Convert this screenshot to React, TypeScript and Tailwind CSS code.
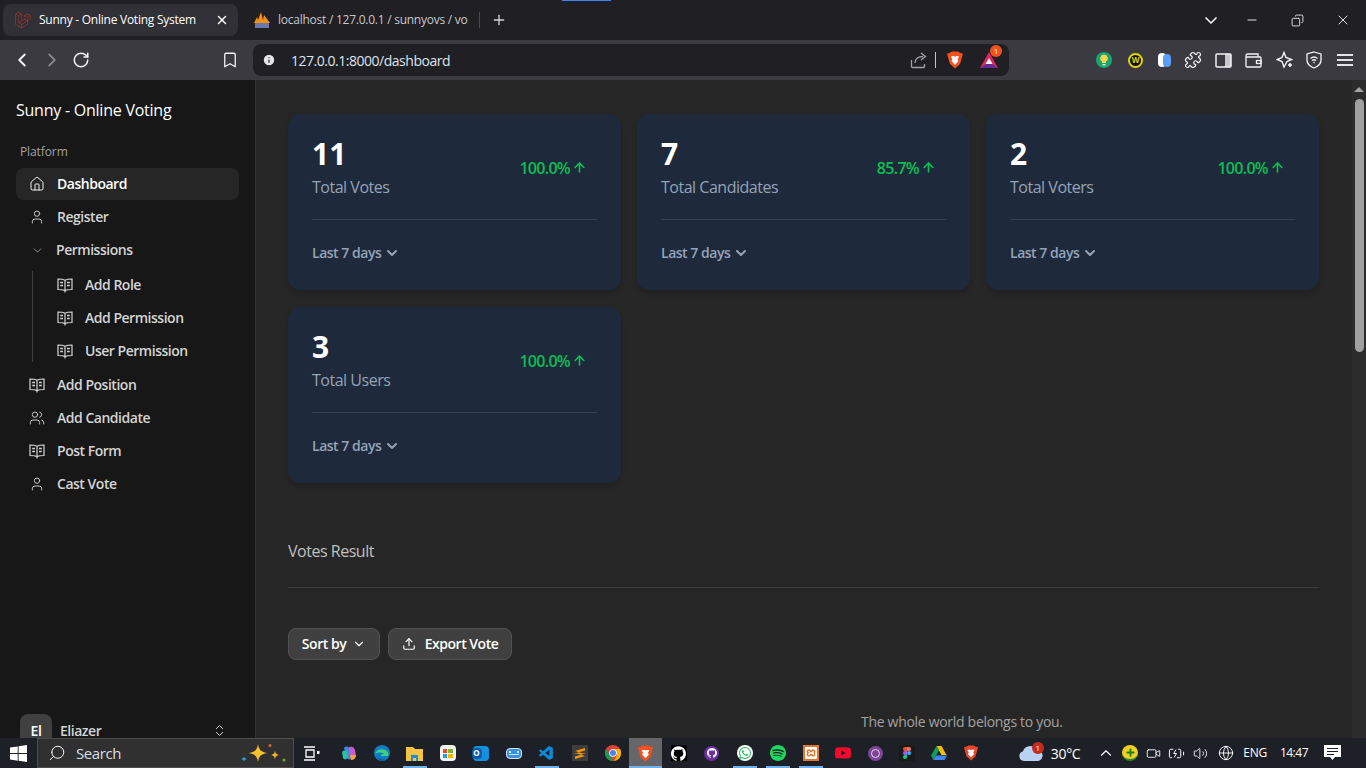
import {
  Bookmark, ChevronDown, ChevronLeft, ChevronRight, ChevronUp, ChevronsUpDown, Copy,
  House, Info, Minus, Plus, Puzzle, RotateCw, Search, Upload, User, Users, Video, Volume2, Globe, X, BatteryCharging, ArrowUp,
} from 'lucide-react';
import { SiGithub, SiLaravel, SiSpotify, SiWhatsapp, SiXampp, SiYoutube } from 'react-icons/si';
import { VscVscode } from 'react-icons/vsc';

const stats = [
  { value: '11', label: 'Total Votes', change: '100.0%' },
  { value: '7', label: 'Total Candidates', change: '85.7%' },
  { value: '2', label: 'Total Voters', change: '100.0%' },
  { value: '3', label: 'Total Users', change: '100.0%' },
];

function BraveIcon({ size = 18, color = '#f4511e' }: { size?: number; color?: string }) {
  return (
    <svg width={size} height={size} viewBox="0 0 18 18">
      <path d="M3.500 2 6 .5h6L14.500 2 17 2.500 16 6l-.5 2-1.500 5-5 4.500L4 13 2.500 8 2 6 1 2.500z" fill={color} />
      <path d="M5 5.500 7.500 5 9 5.800 10.500 5l2.500.5-1.500 3 1 1.500L9 14l-3.500-4 1-1.500z" fill="#fff" />
    </svg>
  );
}

function BookIcon() {
  return (
    <svg width="16" height="16" viewBox="0 0 16 16" fill="none" stroke="currentColor" strokeWidth="1.200">
      <path d="M8 3.200C6.500 2.300 4 2 1 2v10.500c2.800 0 5.500.2 7 1.300 1.500-1.100 4.200-1.300 7-1.300V2c-3 0-5.500.3-7 1.200zM8 3.200V15.500" />
      <path d="M3.200 5.500h2.800M3.200 8.500h2.800M10 5.500h2.800M10 8.500h2.800" strokeWidth="1.500" />
    </svg>
  );
}

function Tabs() {
  return (
    <div className="relative flex h-10 shrink-0 items-center bg-[#1f1f24] pl-[3px] text-[12px] tracking-[-0.25px] text-white">
      <div className="absolute left-[562px] top-0 h-px w-[49px] bg-[#3b82f6]" />
      <div className="flex h-8 w-[235px] items-center rounded-lg bg-[#303036] pl-[12px] pr-[9px]">
        <SiLaravel size={16} color="#b9342c" />
        <span className="ml-[8px] flex-1 truncate">Sunny - Online Voting System</span>
        <X size={14} strokeWidth={2.5} />
      </div>
      <div className="ml-[15px] flex w-[225px] items-center text-[#c8c8cc]">
        <svg width="18" height="17" viewBox="0 0 18 17" className="shrink-0">
          <path d="M1 11 4 5l1 3 3-8 2 8 1-5 3 4 3 4z" fill="#f29111" />
          <rect x="2" y="11" width="14" height="5" fill="#6c78af" />
        </svg>
        <span className="ml-[7px] w-[189px] whitespace-nowrap">localhost / 127.0.0.1 / sunnyovs / vo</span>
      </div>
      <div className="ml-[1px] h-4 w-px bg-[#4a4a50]" />
      <Plus size={16} className="ml-[11px] text-[#d4d4d8]" />
      <div className="ml-auto flex items-center text-white">
        <svg width="16" height="16" viewBox="0 0 16 16" fill="none" stroke="#fff" strokeWidth="1.500" className="mr-[26px]"><path d="M2.500 5.500 8 11l5.500-5.500" /></svg>
        <Minus size={14} strokeWidth={1.5} className="mr-[32px]" />
        <Copy size={13} strokeWidth={1.5} className="mr-[31px] -scale-x-100" />
        <X size={16} strokeWidth={1.3} className="mr-[15px]" />
      </div>
    </div>
  );
}

function Toolbar() {
  return (
    <div className="flex h-10 shrink-0 items-center bg-[#3a3a40] text-[#f4f4f5]">
      <ChevronLeft size={22} strokeWidth={2} className="ml-[11px]" />
      <ChevronRight size={22} strokeWidth={2} className="ml-2 text-[#85858a]" />
      <RotateCw size={18} strokeWidth={2} className="ml-[9px]" />
      <Bookmark size={18} strokeWidth={1.7} className="ml-[131px]" />
      <div className="ml-[14px] flex h-8 w-[756px] items-center rounded-lg bg-[#1f1f24] pl-[9px] pr-[11px]">
        <Info size={14} fill="#e4e4e7" stroke="#1f1f24" />
        <span className="ml-[15px] flex-1 text-[14px] text-[#dbe3ec]">127.0.0.1:8000/dashboard</span>
        <svg width="17" height="17" viewBox="0 0 17 17" fill="none" stroke="#a1a1aa" strokeWidth="1.300">
          <path d="M1.500 8v6.500a1 1 0 0 0 1 1h11a1 1 0 0 0 1-1V12" />
          <path d="M5 11c0-4 3-6.500 8-6.500M11 1l4.500 3.500L11 8" />
        </svg>
        <div className="ml-[8px] mr-[10px] h-4 w-px bg-[#c4c4c8]" />
        <BraveIcon size={18} />
        <div className="relative ml-[16px]">
          <svg width="18" height="16" viewBox="0 0 18 16">
            <path d="M9 0 18 16H0z" fill="#e0245e" />
            <path d="M0 16 9 10l9 6z" fill="#662d91" />
            <path d="M9 6l3.500 6h-7z" fill="#fff" />
          </svg>
          <span className="absolute -right-[4px] -top-[7px] flex h-3 w-3 items-center justify-center rounded-full bg-[#f4511e] text-[8px] tracking-normal text-white">1</span>
        </div>
      </div>
      <svg width="16" height="16" viewBox="0 0 16 16" className="ml-[87px]">
        <circle cx="8" cy="8" r="8" fill="#17a673" />
        <path d="M8 2.500a3.800 3.800 0 0 0-2 7v1.500h4V9.500a3.800 3.800 0 0 0-2-7z" fill="#fcd34d" />
        <rect x="6.500" y="12" width="3" height="1.500" fill="#e5e7eb" />
      </svg>
      <div className="ml-[16px] flex h-[15px] w-[15px] items-center justify-center rounded-full border-2 border-[#e3d40b] bg-[#111] text-[8px] font-bold tracking-normal text-[#e3d40b]">W</div>
      <div className="relative ml-[15px] h-[14px] w-[14px]">
        <div className="h-full w-2 rounded-sm bg-white" />
        <div className="absolute left-[5px] top-[1px] h-[13px] w-[8px] rounded-sm bg-[#5b9ef6]" />
      </div>
      <Puzzle size={18} strokeWidth={1.6} className="ml-[12px]" />
      <svg width="17" height="15" viewBox="0 0 17 15" fill="none" className="ml-[13px]">
        <rect x="10" y="1" width="6" height="13" fill="#c8c8cc" />
        <rect x="1" y="1" width="15" height="13" rx="1" stroke="#f4f4f5" strokeWidth="1.500" />
      </svg>
      <svg width="17" height="15" viewBox="0 0 17 15" fill="none" stroke="#f4f4f5" strokeWidth="1.300" className="ml-[13px]">
        <path d="M1 4V2.500A1.500 1.500 0 0 1 2.500 1H13v3M1 4h14a1 1 0 0 1 1 1v8a1 1 0 0 1-1 1H2a1 1 0 0 1-1-1z" />
        <rect x="11.500" y="7.500" width="4.500" height="3" />
      </svg>
      <svg width="18" height="18" viewBox="0 0 18 18" fill="none" stroke="#f4f4f5" strokeWidth="1.400" className="ml-[14px]">
        <path d="M8 1.500 10 6.500l5.500 2-4.500 2-3 5.500-2-5.500-5-2 5-2z" />
        <path d="M14 12v4M12 14h4" strokeWidth="1.600" />
      </svg>
      <svg width="16" height="18" viewBox="0 0 16 18" fill="none" stroke="#f4f4f5" strokeWidth="1.300" className="ml-[12px]">
        <path d="M8 1 15 3v6c0 4-3 6.500-7 8-4-1.500-7-4-7-8V3z" />
        <path d="M4.500 7.500c2-1.700 5-1.700 7 0M6 9.500c1.200-.9 2.800-.9 4 0" />
        <circle cx="8" cy="11.500" r=".8" fill="#f4f4f5" stroke="none" />
      </svg>
      <div className="ml-[15px] flex w-4 flex-col gap-[3px]">
        <div className="h-[2px] bg-[#e4e4e7]" />
        <div className="h-[2px] bg-[#e4e4e7]" />
        <div className="h-[2px] bg-[#e4e4e7]" />
      </div>
    </div>
  );
}

function NavItem({ icon, label, active }: { icon: React.ReactNode; label: string; active?: boolean }) {
  return (
    <div className={`flex h-8 items-center rounded-lg pl-[13px] text-[14px] font-semibold ${active ? 'bg-[#262626] text-white' : 'text-[#d4d4d4]'}`}>
      <span className="flex w-4 justify-center">{icon}</span>
      <span className="mb-[2px] ml-[12px]">{label}</span>
    </div>
  );
}

function Sidebar() {
  const book = <BookIcon />;
  const user = <User size={16} strokeWidth={1.4} />;
  return (
    <aside className="flex w-[256px] shrink-0 flex-col border-r border-[#333] bg-[#171717] pl-4 pr-4 text-[#d4d4d4]">
      <div className="flex h-[666px] shrink-0 flex-col">
        <div className="mt-[18px] text-[16px] leading-6 tracking-[-0.24px] text-white">Sunny - Online Voting</div>
        <div className="ml-1 mt-[22px] text-[12px] leading-4 tracking-[-0.1px] text-[#a1a1a1]">Platform</div>
        <nav className="mt-[8px] flex flex-col gap-px">
          <NavItem active icon={<House size={16} strokeWidth={1.4} />} label="Dashboard" />
          <NavItem icon={user} label="Register" />
          <div className="flex h-8 items-center pl-[13px] text-[14px] font-semibold">
            <span className="flex w-4 justify-center"><ChevronDown size={13} strokeWidth={1.2} /></span>
            <span className="mb-[2px] ml-[11px]">Permissions</span>
          </div>
          <div className="relative mb-px ml-4 mt-[2px] flex flex-col gap-px pl-[12px]">
            <div className="absolute bottom-[5px] left-0 top-[2px] w-px bg-[#404040]" />
            <NavItem icon={book} label="Add Role" />
            <NavItem icon={book} label="Add Permission" />
            <NavItem icon={book} label="User Permission" />
          </div>
          <NavItem icon={book} label="Add Position" />
          <NavItem icon={<Users size={16} strokeWidth={1.4} />} label="Add Candidate" />
          <NavItem icon={book} label="Post Form" />
          <NavItem icon={user} label="Cast Vote" />
        </nav>
        <div className="mt-auto flex h-8 items-center pl-1 pr-3">
          <div className="flex h-8 w-8 items-center justify-center rounded-lg bg-[#404040] text-[14px] font-semibold text-white">El</div>
          <span className="ml-2 flex-1 text-[14px] font-semibold">Eliazer</span>
          <ChevronsUpDown size={15} strokeWidth={1.6} />
        </div>
      </div>
    </aside>
  );
}

function StatCard({ value, label, change }: { value: string; label: string; change: string }) {
  return (
    <div className="h-[176px] rounded-xl bg-[#1e293b] pl-6 pr-6 pt-[22px] shadow-md">
      <div className="flex items-center justify-between pr-[10px]">
        <div>
          <div className="text-[30px] font-bold leading-9 tracking-normal text-white">{value}</div>
          <div className="mt-[3px] text-[16px] leading-6 text-[#94a3b8]">{label}</div>
        </div>
        <div className="flex items-center text-[16px] font-semibold tracking-[-0.7px] text-[#0abf53]">
          {change}
          <ArrowUp size={15} strokeWidth={2.6} className="ml-[2px]" />
        </div>
      </div>
      <div className="mt-[20px] border-t border-[#334155]" />
      <div className="mt-[23px] flex items-center text-[14px] font-semibold leading-5 text-[#94a3b8]">
        Last 7 days
        <ChevronDown size={16} strokeWidth={3} className="ml-[3px]" />
      </div>
    </div>
  );
}

function Main() {
  return (
    <main className="flex min-w-0 flex-1 overflow-hidden bg-[#262626]">
      <div className="flex-1 pl-8 pr-[33px] pt-[34px]">
        <div className="grid grid-cols-3 gap-x-4 gap-y-[17px]">
          {stats.map(s => <StatCard key={s.label} {...s} />)}
        </div>
        <div className="mt-[56px] text-[16px] leading-6 text-[#c0c0c0]">Votes Result</div>
        <div className="mt-6 border-t border-[#3d3d3d]" />
        <div className="mt-10 flex gap-2 text-[14px] font-semibold text-white">
          <div className="flex h-8 w-[92px] items-center justify-center rounded-lg border border-[#525252] bg-[#404040] pb-[2px]">
            Sort by
            <ChevronDown size={14} className="ml-[6px] mt-[2px]" />
          </div>
          <div className="flex h-8 w-[124px] items-center justify-center rounded-lg border border-[#525252] bg-[#404040] pb-[2px]">
            <Upload size={14} className="mr-[9px] mt-[2px]" />
            Export Vote
          </div>
        </div>
        <div className="ml-[573px] mt-[52px] text-[14px] leading-5 tracking-[-0.3px] text-[#a3a3a3]">The whole world belongs to you.</div>
      </div>
      <div className="w-[14px] shrink-0 bg-[#2c2c2c]">
        <div className="mx-auto mt-[7px] h-0 w-0 border-x-[5px] border-b-[5px] border-x-transparent border-b-[#a3a3a3]" />
        <div className="mx-auto mt-[7px] h-[253px] w-[9px] rounded-full bg-[#a0a0a0]" />
      </div>
    </main>
  );
}

function TaskIcon({ children, bar, active, narrow }: { children: React.ReactNode; bar?: boolean; active?: boolean; narrow?: boolean }) {
  return (
    <div className={`relative flex h-full items-center justify-center ${narrow ? 'w-8' : 'w-[33px]'} ${active ? 'bg-[#65656a]' : ''}`}>
      {children}
      {(bar || active) && <div className={`absolute bottom-0 h-[2px] bg-[#6fb1e8] ${active ? 'w-full' : 'w-[24px]'}`} />}
    </div>
  );
}

function Taskbar() {
  return (
    <footer className="relative flex h-[30px] shrink-0 items-center bg-[#1d2026] tracking-[-0.1px] text-white">
      <div className="flex w-[37px] justify-center">
        <svg width="17" height="17" viewBox="0 0 17 17" fill="#fff">
          <path d="M0 2.500 7.700 1.400v6.700H0zM8.600 1.300 17 0v8.100H8.600zM0 9h7.700v6.700L0 14.600zM8.600 9H17v8l-8.400-1.200z" />
        </svg>
      </div>
      <div className="flex h-full w-[257px] items-center border border-[#4d4d4d] bg-[#303030] pl-[10px]">
        <Search size={18} strokeWidth={1.3} className="-scale-x-100" />
        <span className="ml-[10px] flex-1 text-[15px] tracking-[-0.4px] text-[#d8dee6]">Search</span>
        <svg width="46" height="24" viewBox="0 0 46 24" className="mr-[7px]">
          <path d="M18 3c1 6 2.500 7.500 9 9-6.500 1.500-8 3-9 9-1-6-2.500-7.500-9-9 6.500-1.500 8-3 9-9z" fill="#f6c02c" />
          <path d="M35 9.500c.5 3 1 3.500 4 4.500-3 1-3.500 1.500-4 4.500-.5-3-1-3.500-4-4.500 3-1 3.500-1.500 4-4.500z" fill="#f0b429" />
          <path d="M4 15c.4 2 .8 2.400 3 3-2.200.6-2.600 1-3 3-.4-2-.8-2.400-3-3 2.200-.6 2.600-1 3-3z" fill="#2f9be0" />
          <circle cx="30" cy="4.500" r="1.500" fill="#e5632b" />
          <circle cx="44" cy="19" r="1.500" fill="#76a832" />
        </svg>
      </div>
      <div className="flex h-full items-center pl-px">
        <div className="mr-[4px] h-full">
          <TaskIcon>
            <svg width="16" height="15" viewBox="0 0 16 15" fill="none" stroke="#fff" strokeWidth="1.300">
              <path d="M0 1h11M0 14h11M2 4h8v7H2z" />
              <rect x="13" y="5" width="2.500" height="3" fill="#fff" stroke="none" />
            </svg>
          </TaskIcon>
        </div>
        <TaskIcon>
          <svg width="16" height="16" viewBox="0 0 16 16">
            <path d="M3 3c1-2 4-2 5 0l3 9c-1 3-4 3-5 1z" fill="#3f8be0" />
            <path d="M8 2c3-1 5 0 6 3l1 6c-1 3-3 3-5 3L8 8z" fill="#c85bd4" />
            <path d="M1 7c1-2 4-2 5 0l1 5c-1 3-4 3-5 1z" fill="#27c2a2" />
            <path d="M9 10h6c0 3-2 5-5 5z" fill="#f4a03c" />
          </svg>
        </TaskIcon>
        <TaskIcon>
          <svg width="16" height="16" viewBox="0 0 16 16">
            <circle cx="8" cy="8" r="8" fill="#0f7cc4" />
            <path d="M1 9c1-4 6-6 10-4 3 1 4 4 3 6H7c0-2 2-2 3-2-2-2-6-2-9 0z" fill="#41d07a" />
            <path d="M4 12c2 3 6 3 9 1l-5 3c-2 0-3-2-4-4z" fill="#1a4c9c" />
          </svg>
        </TaskIcon>
        <TaskIcon bar>
          <svg width="17" height="15" viewBox="0 0 17 15">
            <path d="M0 1h7l2 2h8v12H0z" fill="#f6c445" />
            <path d="M5 9h7v6H10v-3H7v3H5z" fill="#1e8fd8" />
          </svg>
        </TaskIcon>
        <TaskIcon>
          <div className="grid h-4 w-4 grid-cols-2 content-center justify-center gap-px rounded-sm bg-[#f3f3f3] p-[3px]">
            <div className="h-1 bg-[#e74c2c]" />
            <div className="h-1 bg-[#7eb52e]" />
            <div className="h-1 bg-[#23a0e6]" />
            <div className="h-1 bg-[#f4b400]" />
          </div>
        </TaskIcon>
        <TaskIcon>
          <div className="relative h-[15px] w-4 rounded-sm bg-[#1490df]">
            <div className="absolute -left-[1px] top-[2px] flex h-[11px] w-[10px] items-center justify-center rounded-sm bg-[#0a5ea8] text-[8px] font-bold">O</div>
          </div>
        </TaskIcon>
        <TaskIcon>
          <div className="flex h-[11px] w-4 flex-col justify-center gap-px rounded-sm border border-[#cfe6fa] bg-[#3b8edb] px-[2px]">
            <div className="h-[2px] border-x-2 border-[#cfe6fa] bg-[#3b8edb]" />
            <div className="h-px bg-[#cfe6fa]" />
          </div>
        </TaskIcon>
        <TaskIcon bar><VscVscode size={17} color="#0d88d8" /></TaskIcon>
        <TaskIcon>
          <div className="flex h-4 w-4 items-center justify-center bg-[#3d3d3d]">
            <svg width="10" height="11" viewBox="0 0 10 11" fill="#f59a0c"><path d="M0 3 10 0v2.500L0 5.500zM0 5l10 3v-2L0 3zM0 8.500 10 5.500V8L0 11z" /></svg>
          </div>
        </TaskIcon>
        <TaskIcon>
          <svg width="16" height="16" viewBox="0 0 16 16">
            <circle cx="8" cy="8" r="8" fill="#db4437" />
            <path d="M8 16A8 8 0 0 1 1 4l4 7z" fill="#0f9d58" />
            <path d="M8 4h7a8 8 0 0 1-6 12l3-6z" fill="#f4b400" />
            <circle cx="8" cy="8" r="3.800" fill="#fff" />
            <circle cx="8" cy="8" r="3" fill="#4285f4" />
          </svg>
        </TaskIcon>
        <TaskIcon active><BraveIcon size={17} color="#f4511e" /></TaskIcon>
        <TaskIcon>
          <div className="flex h-4 w-4 items-center justify-center bg-black"><SiGithub size={15} color="#fff" /></div>
        </TaskIcon>
        <TaskIcon>
          <div className="flex h-[15px] w-[15px] items-center justify-center rounded-full bg-[#6b2fa0]"><SiGithub size={10} color="#fff" /></div>
        </TaskIcon>
        <TaskIcon bar>
          <div className="flex h-4 w-4 items-center justify-center rounded-full bg-white"><SiWhatsapp size={12} color="#25c05a" /></div>
        </TaskIcon>
        <TaskIcon bar><SiSpotify size={16} color="#1ed760" /></TaskIcon>
        <TaskIcon bar>
          <div className="flex h-4 w-4 items-center justify-center bg-[#e2762b]"><SiXampp size={12} color="#fff" /></div>
        </TaskIcon>
        <TaskIcon narrow><SiYoutube size={16} color="#f5092c" /></TaskIcon>
        <TaskIcon narrow>
          <div className="flex h-[15px] w-[15px] items-center justify-center rounded-full bg-[#7d4698]">
            <div className="h-[9px] w-[9px] rounded-full border border-[#e6d4f0]" />
          </div>
        </TaskIcon>
        <TaskIcon narrow>
          <div className="flex h-4 w-4 items-center justify-center bg-[#1a1a1a]">
            <svg width="8" height="12" viewBox="0 0 8 12">
              <path d="M0 2a2 2 0 0 1 2-2h2v4H2a2 2 0 0 1-2-2z" fill="#f24e1e" />
              <path d="M4 0h2a2 2 0 0 1 0 4H4z" fill="#ff7262" />
              <path d="M0 6a2 2 0 0 1 2-2h2v4H2a2 2 0 0 1-2-2z" fill="#a259ff" />
              <circle cx="6" cy="6" r="2" fill="#1abcfe" />
              <path d="M0 10a2 2 0 0 1 2-2h2v2a2 2 0 0 1-4 0z" fill="#0acf83" />
            </svg>
          </div>
        </TaskIcon>
        <TaskIcon narrow>
          <svg width="16" height="14" viewBox="0 0 16 14">
            <path d="M5.500 0h5l5 9h-5z" fill="#fbbc04" />
            <path d="M5.500 0 0 9.500 2.500 14 8 4.500z" fill="#0f9d58" />
            <path d="M5 9.500h11L13.500 14h-11z" fill="#4285f4" />
          </svg>
        </TaskIcon>
        <TaskIcon narrow><BraveIcon size={16} color="#e8452c" /></TaskIcon>
      </div>
      <div className="ml-auto flex h-full items-center">
        <div className="relative">
          <svg width="24" height="15" viewBox="0 0 24 15"><path d="M5 15a5 5 0 0 1-1-9.800A7 7 0 0 1 17 4a5.500 5.500 0 0 1 2 11z" fill="#b9d3f2" /></svg>
          <span className="absolute -right-[1px] -top-[4px] flex h-3 w-3 items-center justify-center rounded-full bg-[#c42b1c] text-[8px]">1</span>
        </div>
        <span className="ml-2 text-[14px] tracking-[-0.3px]">30°C</span>
        <ChevronUp size={18} strokeWidth={1.5} className="ml-[17px]" />
        <div className="ml-[7px] flex h-4 w-4 items-center justify-center rounded-full border-b-2 border-[#2a8a2a] bg-[#f0d020]">
          <Plus size={11} strokeWidth={4} color="#1f7a1f" />
        </div>
        <Video size={15} strokeWidth={1.4} className="ml-[8px]" />
        <BatteryCharging size={17} strokeWidth={1.4} className="ml-[7px]" />
        <Volume2 size={15} strokeWidth={1.4} className="ml-2" />
        <Globe size={16} strokeWidth={1.4} className="ml-[10px]" />
        <span className="ml-[9px] text-[12px] tracking-[-0.3px]">ENG</span>
        <span className="ml-[13px] text-[12px] tracking-[-0.5px]">14:47</span>
        <svg width="17" height="16" viewBox="0 0 17 16" className="ml-[16px] mr-[25px]">
          <path d="M0 0h17v12h-6l-2.500 3L6 12H0z" fill="#fff" />
          <path d="M3 3.500h11M3 6.500h11M3 9.500h7" stroke="#1d2026" strokeWidth="1" />
        </svg>
      </div>
    </footer>
  );
}

export default function App() {
  return (
    <div className="flex h-screen flex-col overflow-hidden font-['Open_Sans',sans-serif] tracking-[-0.48px]">
      <Tabs />
      <Toolbar />
      <div className="flex min-h-0 flex-1 overflow-hidden">
        <Sidebar />
        <Main />
      </div>
      <Taskbar />
    </div>
  );
}
